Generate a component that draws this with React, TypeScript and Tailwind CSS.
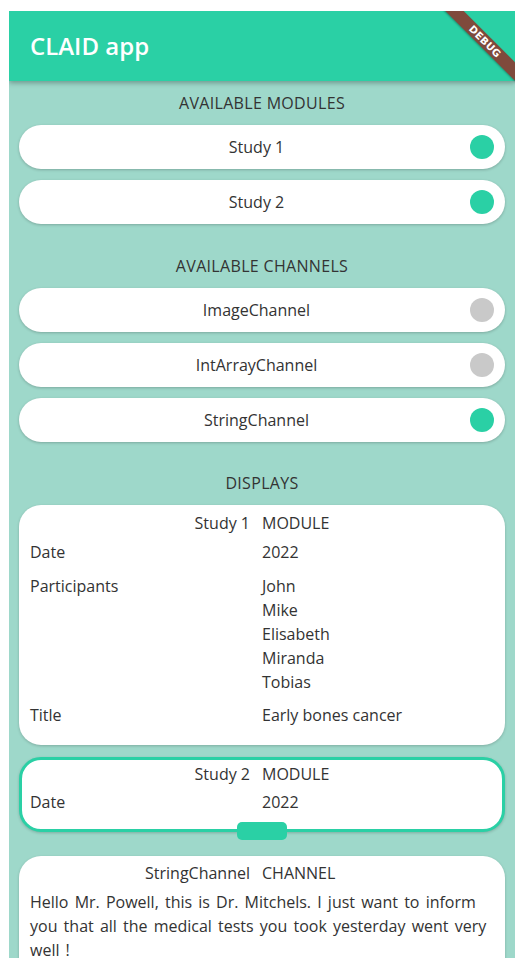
const modules = [
  { name: 'Study 1', on: true },
  { name: 'Study 2', on: true },
];

const channels = [
  { name: 'ImageChannel', on: false },
  { name: 'IntArrayChannel', on: false },
  { name: 'StringChannel', on: true },
];

function SectionHeader({ label }: { label: string }) {
  return (
    <div className="h-[44px] flex items-center justify-center text-[16px] text-[#333] tracking-[0.02em]">
      {label}
    </div>
  );
}

function ToggleRow({ name, on }: { name: string; on: boolean }) {
  return (
    <div className="h-[44px] rounded-full bg-white shadow-[0_1px_3px_rgba(0,0,0,0.22)] grid grid-cols-[1fr_auto_1fr] items-center pr-[11px]">
      <div />
      <span className="text-[16px] text-[#333]">{name}</span>
      <div className="flex justify-end">
        <span className={`w-[24px] h-[24px] rounded-full ${on ? 'bg-[#2ad0a5]' : 'bg-[#c9c9c9]'}`} />
      </div>
    </div>
  );
}

function Row({ label, children, className = '' }: { label: string; children: React.ReactNode; className?: string }) {
  return (
    <div className={`grid grid-cols-2 ${className}`}>
      <div className="pl-[11px]">{label}</div>
      <div>{children}</div>
    </div>
  );
}

function TitleRow({ name, kind }: { name: string; kind: string }) {
  return (
    <div className="grid grid-cols-2 h-[24px] items-center">
      <div className="text-right pr-[12px]">{name}</div>
      <div>{kind}</div>
    </div>
  );
}

export default function App() {
  return (
    <div className="w-[524px] h-[968px] bg-white pt-[11px] pl-[9px] overflow-hidden" style={{ fontFamily: '"Open Sans", "Noto Sans", sans-serif' }}>
      <div className="relative w-[506px] h-[947px] overflow-hidden bg-[#9ed8ca]">
        {/* app bar */}
        <div className="relative z-10 h-[70px] bg-[#2ad0a5] shadow-[0_2px_5px_rgba(0,0,0,0.3)] flex items-center pl-[21px]">
          <span className="text-white text-[24px] font-semibold">CLAID app</span>
        </div>

        {/* debug banner */}
        <div className="absolute z-20 top-[24px] right-[-45px] w-[150px] h-[13px] bg-[#7f4a3c] rotate-45 flex items-center justify-center shadow-[0_1px_2px_rgba(0,0,0,0.3)]">
          <span className="text-white text-[10px] font-bold tracking-[0.03em] leading-none" style={{ fontFamily: '"DejaVu Sans", sans-serif' }}>
            DEBUG
          </span>
        </div>

        <div className="px-[10px] text-[16px] leading-[24px] text-[#333]">
          <SectionHeader label="AVAILABLE MODULES" />
          <div className="flex flex-col gap-[11px]">
            {modules.map((m) => (
              <ToggleRow key={m.name} name={m.name} on={m.on} />
            ))}
          </div>

          <div className="mt-[20px]">
            <SectionHeader label="AVAILABLE CHANNELS" />
          </div>
          <div className="flex flex-col gap-[11px]">
            {channels.map((c) => (
              <ToggleRow key={c.name} name={c.name} on={c.on} />
            ))}
          </div>

          <div className="mt-[19px]">
            <SectionHeader label="DISPLAYS" />
          </div>

          {/* Study 1 */}
          <div className="bg-white rounded-[22px] shadow-[0_1px_3px_rgba(0,0,0,0.2)] pt-[6px] pb-[18px]">
            <TitleRow name="Study 1" kind="MODULE" />
            <Row label="Date" className="mt-[5px]">2022</Row>
            <Row label="Participants" className="mt-[10px]">
              <div>John</div>
              <div>Mike</div>
              <div>Elisabeth</div>
              <div>Miranda</div>
              <div>Tobias</div>
            </Row>
            <Row label="Title" className="mt-[9px]">Early bones cancer</Row>
          </div>

          {/* Study 2 - selected */}
          <div className="relative mt-[12px] bg-white rounded-[22px] border-[3px] border-[#2ad0a5] shadow-[0_1px_3px_rgba(0,0,0,0.2)] pt-[2px] pb-[15px]">
            <div className="-ml-[3px] -mr-[3px]">
              <TitleRow name="Study 2" kind="MODULE" />
              <Row label="Date" className="mt-[4px]">2022</Row>
            </div>
            <div className="absolute left-1/2 -translate-x-1/2 bottom-[-11px] w-[50px] h-[18px] rounded-[5px] bg-[#2ad0a5]" />
          </div>

          {/* StringChannel */}
          <div className="mt-[24px] bg-white rounded-[22px] shadow-[0_1px_3px_rgba(0,0,0,0.2)] pt-[5px] pb-[18px]">
            <TitleRow name="StringChannel" kind="CHANNEL" />
            <p className="mt-[5px] px-[11px] [word-spacing:2px]">
              Hello Mr. Powell, this is Dr. Mitchels. I just want to inform you that all the medical tests you took yesterday went very well !
            </p>
          </div>
        </div>
      </div>
    </div>
  );
}
